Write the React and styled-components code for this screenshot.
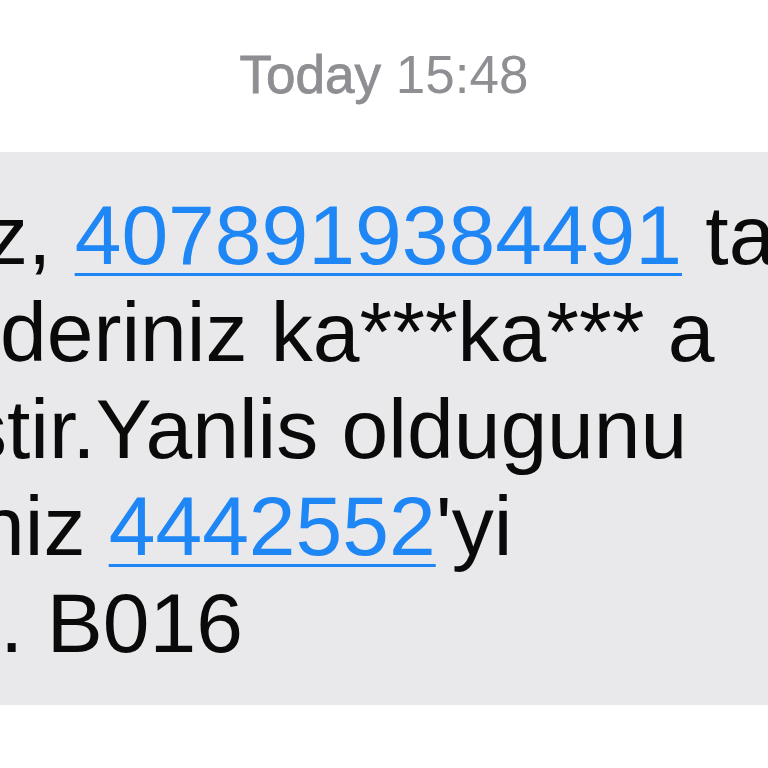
import styled, { createGlobalStyle } from "styled-components";

const GlobalStyle = createGlobalStyle`
    html, body {
        margin: 0;
        padding: 0;
        background: #ffffff;
        overflow: hidden;
    }
`;

const Screen = styled.div`
    width: 768px;
    height: 768px;
    overflow: hidden;
    background-color: #ffffff;
    font-family: 'Liberation Sans', Arial, Helvetica, sans-serif;
`;

const Stamp = styled.div`
    box-sizing: border-box;
    height: 152px;
    padding-top: 45px;
    text-align: center;
    font-size: 53px;
    line-height: 60px;
    color: #8e8e93;
    white-space: nowrap;
`;

const Day = styled.span`
    font-weight: 400;
    -webkit-text-stroke: 0.8px #8e8e93;
`;

const Bubble = styled.div`
    box-sizing: border-box;
    height: 553px;
    padding: 35px 0 33px;
    background-color: #e9e9eb;
    overflow: hidden;
`;

const Line = styled.div`
    margin-left: ${(p) => p.$shift}px;
    font-size: 84px;
    line-height: 97px;
    color: #0a0a0a;
    white-space: nowrap;
`;

const Link = styled.span`
    color: #1f86f5;
    text-decoration: underline;
    text-decoration-thickness: 3px;
    text-underline-offset: 9px;
`;

function App() {
    return (
        <>
            <GlobalStyle />
            <Screen>
                <Stamp>
                    <Day>Today</Day> 15:48
                </Stamp>

                <Bubble>
                    <Line $shift={-14}>
                        z, <Link>4078919384491</Link> ta
                    </Line>
                    <Line $shift={0}>deriniz ka***ka*** a</Line>
                    <Line $shift={-35}>stir.Yanlis oldugunu</Line>
                    <Line $shift={-22}>
                        niz <Link>4442552</Link>'yi
                    </Line>
                    <Line $shift={0}>. B016</Line>
                </Bubble>
            </Screen>
        </>
    );
}

export default App;
